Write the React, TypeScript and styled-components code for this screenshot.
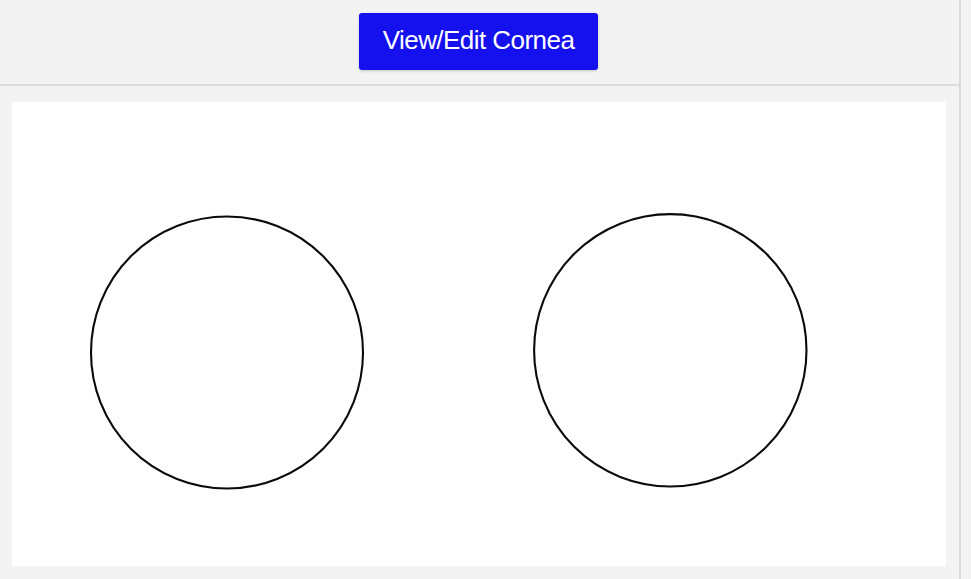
import React from "react";
import styled, { createGlobalStyle } from "styled-components";

const Global = createGlobalStyle`
  html, body {
    margin: 0;
    padding: 0;
    background: #f3f3f3;
    font-family: "Liberation Sans", Arial, sans-serif;
  }
`;

const Panel = styled.div`
  width: 959px;
  height: 579px;
  border-right: 2px solid #d9d9d9;
  background: #f3f3f3;
  display: flex;
  flex-direction: column;
`;

const Header = styled.div`
  box-sizing: border-box;
  height: 86px;
  border-bottom: 2px solid #dcdcdc;
  display: flex;
  justify-content: center;
  align-items: flex-start;
  padding-top: 13px;
`;

const PrimaryButton = styled.button`
  width: 239px;
  height: 57px;
  margin-left: -2px;
  background: #1410ee;
  color: #ffffff;
  border: none;
  border-radius: 3px;
  box-shadow: 0 1px 3px rgba(0, 0, 0, 0.18);
  font-family: "Liberation Sans", Arial, sans-serif;
  font-size: 26px;
  letter-spacing: -0.55px;
  padding: 0 0 2px 0;
  cursor: pointer;
`;

const Body = styled.div`
  flex: 1;
  padding: 16px 13px 13px 12px;
  display: flex;
`;

const Canvas = styled.div`
  flex: 1;
  background: #ffffff;
  display: flex;
`;

const Drawing = styled.svg`
  display: block;
  width: 934px;
  height: 464px;
`;

export default function App() {
  return (
    <>
      <Global />
      <Panel>
        <Header>
          <PrimaryButton>View/Edit Cornea</PrimaryButton>
        </Header>
        <Body>
          <Canvas>
            <Drawing viewBox="0 0 934 464">
              <circle cx="215" cy="250.5" r="136" fill="none" stroke="#0a0a0a" strokeWidth="2.1" />
              <circle cx="658.3" cy="248.3" r="136.2" fill="none" stroke="#0a0a0a" strokeWidth="2.1" />
            </Drawing>
          </Canvas>
        </Body>
      </Panel>
    </>
  );
}
